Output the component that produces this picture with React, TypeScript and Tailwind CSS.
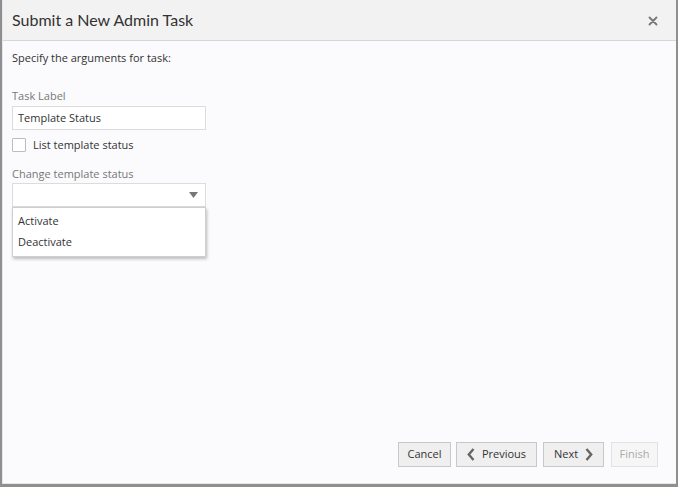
import React from "react";

const font = { fontFamily: '"Open Sans", "Noto Sans", sans-serif' };

export default function App() {
  return (
    <div
      className="w-[678px] h-[487px] bg-[#8f8f8f] pl-[2px] pr-[2px] pb-[3px] flex flex-col text-[#333]"
      style={font}
    >
      <div className="flex-1 flex flex-col bg-[#fbfbfd] border-l border-b border-[#e6e6ea] min-h-0">
        <div className="h-[41px] shrink-0 bg-[#f2f2f2] border-b border-[#d6d6d6] flex items-center justify-between pl-[9px] pr-[18px]">
          <div className="text-[16px] text-[#333]" style={{ fontFamily: '"Lato", "Open Sans", sans-serif' }}>
            Submit a New Admin Task
          </div>
          <svg width="10" height="10" viewBox="0 0 10 10" className="mt-[1px]">
            <path d="M1.5 1.5 L8.5 8.5 M8.5 1.5 L1.5 8.5" stroke="#777" strokeWidth="1.8" strokeLinecap="round" />
          </svg>
        </div>
        <div className="flex-1 flex flex-col px-[9px] pt-[9px] pb-[16px] min-h-0">
          <div className="text-[11px] leading-[16px] text-[#333]">Specify the arguments for task:</div>
          <div className="mt-[22px] text-[11px] leading-[16px] text-[#777]">Task Label</div>
          <div className="mt-[2px] w-[194px] h-[24px] border border-[#dcdcdc] bg-white flex items-center pl-[5px] text-[11px] text-[#333]">
            Template Status
          </div>
          <div className="mt-[8px] flex items-center h-[14px]">
            <div className="w-[14px] h-[14px] border border-[#bdbdbd] bg-white rounded-[1px]" />
            <div className="ml-[7px] text-[11px] text-[#333]">List template status</div>
          </div>
          <div className="mt-[14px] text-[11px] leading-[16px] text-[#777]">Change template status</div>
          <div className="relative mt-[1px] w-[194px]">
            <div className="h-[24px] border border-[#dcdcdc] bg-white flex items-center justify-end pr-[7px]">
              <svg width="9" height="6" viewBox="0 0 9 6">
                <path d="M0 0 L9 0 L4.5 6 Z" fill="#777" />
              </svg>
            </div>
            <div className="absolute left-0 top-[24px] w-[194px] bg-white border border-[#cfcfcf] shadow-[1px_2px_3px_rgba(0,0,0,0.25)] py-[3px]">
              <div className="h-[21px] flex items-center pl-[5px] text-[11px] text-[#333]">Activate</div>
              <div className="h-[21px] flex items-center pl-[5px] text-[11px] text-[#333]">Deactivate</div>
            </div>
          </div>
          <div className="flex-1" />
          <div className="flex justify-end items-center gap-[5px] pr-[9px]">
            <button className="h-[25px] w-[53px] border border-[#c8c8c8] bg-[#efefef] text-[11px] text-[#333] flex items-center justify-center">
              Cancel
            </button>
            <button className="h-[25px] w-[81px] border border-[#c8c8c8] bg-[#efefef] text-[11px] text-[#333] flex items-center justify-center gap-[7px]">
              <svg width="8" height="13" viewBox="0 0 8 13">
                <path d="M6.5 1 L1.8 6.5 L6.5 12" stroke="#666" strokeWidth="2.4" fill="none" />
              </svg>
              Previous
            </button>
            <button className="ml-[1px] h-[25px] w-[61px] border border-[#c8c8c8] bg-[#efefef] text-[11px] text-[#333] flex items-center justify-center gap-[7px]">
              Next
              <svg width="8" height="13" viewBox="0 0 8 13">
                <path d="M1.5 1 L6.2 6.5 L1.5 12" stroke="#666" strokeWidth="2.4" fill="none" />
              </svg>
            </button>
            <button className="ml-[2px] h-[25px] w-[47px] border border-[#e2e2e2] bg-[#f6f6f6] text-[11px] text-[#aaa] flex items-center justify-center">
              Finish
            </button>
          </div>
        </div>
      </div>
    </div>
  );
}
